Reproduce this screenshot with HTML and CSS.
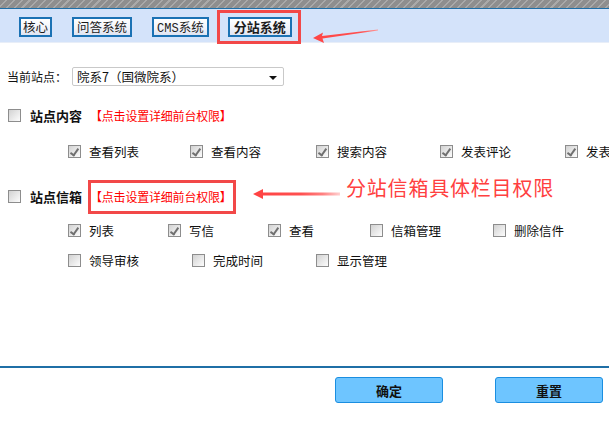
FILE: index.html
```html
<!DOCTYPE html>
<html lang="zh">
<head>
<meta charset="utf-8">
<title>分站系统</title>
<link rel="stylesheet" href="styles.css">
</head>
<body>
<div class="page">
  <div class="stripe"></div>
  <div class="tabbar">
    <span class="tab tab-narrow">核心</span>
    <span class="tab">问答系统</span>
    <span class="tab"><span class="mono">CMS</span>系统</span>
    <span class="tab tab-active">分站系统</span>
  </div>

  <div class="site-row">
    <span class="site-label">当前站点：</span>
    <div class="select">
      <span>院系7（国微院系）</span>
      <span class="caret"></span>
    </div>
  </div>

  <div class="section-row sec1">
    <span class="cb"></span>
    <span class="sec-title">站点内容</span>
    <span class="sec-link">【点击设置详细前台权限】</span>
  </div>
  <div class="opts opts-a">
    <label class="opt"><span class="cb checked"></span>查看列表</label>
    <label class="opt"><span class="cb checked"></span>查看内容</label>
    <label class="opt"><span class="cb checked"></span>搜索内容</label>
    <label class="opt"><span class="cb checked"></span>发表评论</label>
    <label class="opt"><span class="cb checked"></span>发表回复</label>
  </div>

  <div class="section-row sec2">
    <span class="cb"></span>
    <span class="sec-title">站点信箱</span>
    <span class="sec-link">【点击设置详细前台权限】</span>
  </div>
  <div class="opts opts-b">
    <label class="opt"><span class="cb checked"></span>列表</label>
    <label class="opt"><span class="cb checked"></span>写信</label>
    <label class="opt"><span class="cb checked"></span>查看</label>
    <label class="opt"><span class="cb"></span>信箱管理</label>
    <label class="opt"><span class="cb"></span>删除信件</label>
  </div>
  <div class="opts opts-c">
    <label class="opt"><span class="cb"></span>领导审核</label>
    <label class="opt"><span class="cb"></span>完成时间</label>
    <label class="opt"><span class="cb"></span>显示管理</label>
  </div>

  <div class="footer">
    <button class="btn">确定</button>
    <button class="btn">重置</button>
  </div>

  <div class="mark mark-tab"></div>
  <div class="mark mark-link"></div>
  <svg class="arrow arrow-1" width="80" height="16" viewBox="0 0 80 16">
    <defs>
      <linearGradient id="g1" x1="0" y1="0" x2="1" y2="0">
        <stop offset="0" stop-color="#ff4545"/>
        <stop offset="0.75" stop-color="#ff5050"/>
        <stop offset="1" stop-color="#ff9a9a"/>
      </linearGradient>
    </defs>
    <path d="M1 11 L11 5.5 L10 9 L66 2.5 L66 3.6 L10.5 11.5 L12 16 Z" fill="url(#g1)"/>
  </svg>
  <svg class="arrow arrow-2" width="92" height="12" viewBox="0 0 92 12">
    <defs>
      <linearGradient id="g2" x1="0" y1="0" x2="1" y2="0">
        <stop offset="0" stop-color="#ff4242"/>
        <stop offset="0.55" stop-color="#ff5050"/>
        <stop offset="0.8" stop-color="#ff8080"/>
        <stop offset="1" stop-color="#ffd0d0"/>
      </linearGradient>
    </defs>
    <path d="M0 6 L10 1 L10 4.6 L87 4.6 L87 7.4 L10 7.4 L10 11 Z" fill="url(#g2)"/>
  </svg>
  <div class="note">分站信箱具体栏目权限</div>
</div>
</body>
</html>
```

FILE: styles.css
```css
html, body {
  margin: 0;
  padding: 0;
  background: #fff;
}

.page {
  position: relative;
  width: 609px;
  height: 425px;
  overflow: hidden;
  font-family: "Noto Sans CJK SC", "DejaVu Sans", sans-serif;
  font-size: 12px;
  color: #111;
}

.stripe {
  height: 8px;
  background: repeating-linear-gradient(135deg, #8e8e8e 0px, #8e8e8e 4px, #a9a9a9 4px, #a9a9a9 5.5px);
}

.tabbar {
  box-sizing: border-box;
  height: 35px;
  border-top: 1px solid #1f6ea6;
  border-bottom: 1px solid #e8eef8;
  background: #d4e3fa;
  display: flex;
  align-items: flex-start;
  gap: 20px;
  padding: 8px 0 0 19px;
}

.tab {
  box-sizing: border-box;
  height: 20px;
  padding: 0 3px;
  border: 2px solid #1b72b4;
  background: linear-gradient(#ffffff, #f2f4fa 55%, #dfe4f2);
  line-height: 16px;
  font-size: 12.5px;
  color: #1c1c1c;
  white-space: nowrap;
}

.tab-narrow {
  padding: 0 2px;
}

.mono {
  font-family: "Liberation Mono", monospace;
  font-size: 12px;
}

.tab-active {
  font-weight: bold;
  font-size: 13px;
  padding: 0 4px;
  margin-left: -1px;
}

.site-row {
  display: flex;
  align-items: center;
  margin-top: 24px;
  padding-left: 7px;
  height: 19px;
}

.site-label {
  width: 65px;
  font-size: 12px;
}

.select {
  box-sizing: border-box;
  width: 212px;
  height: 19px;
  border: 1px solid #c9c9c9;
  border-radius: 2px;
  display: flex;
  align-items: center;
  justify-content: space-between;
  padding: 0 6px 0 4px;
  font-size: 12.5px;
  line-height: 17px;
}

.caret {
  width: 0;
  height: 0;
  border-left: 4px solid transparent;
  border-right: 4px solid transparent;
  border-top: 4px solid #111;
  margin-top: 2px;
}

.section-row {
  display: flex;
  align-items: center;
  height: 13px;
  padding-left: 8px;
}

.sec1 {
  margin-top: 23px;
}

.sec2 {
  margin-top: 32px;
}

.sec-title {
  margin-left: 9px;
  font-weight: bold;
  font-size: 13px;
  color: #111;
}

.sec-link {
  margin-left: 8px;
  color: #f00;
  font-size: 12px;
  letter-spacing: -0.2px;
}

.cb {
  box-sizing: border-box;
  flex: none;
  width: 13px;
  height: 13px;
  border: 1px solid #8d8d8d;
  background: linear-gradient(135deg, #d2d2d2, #f4f4f4 80%, #fcfcfc);
  display: inline-block;
  position: relative;
}

.cb.checked::after {
  content: "";
  position: absolute;
  left: 3px;
  top: 1px;
  width: 3px;
  height: 7px;
  border-right: 2px solid #707070;
  border-bottom: 2px solid #707070;
  transform: rotate(35deg);
  transform-origin: center;
}

.opts {
  display: grid;
  padding-left: 68px;
  height: 13px;
  white-space: nowrap;
}

.opts-a {
  margin-top: 23px;
  grid-template-columns: 122px 126px 124px 125px 124px;
}

.opts-b {
  margin-top: 21px;
  grid-template-columns: 100px 100px 102px 123px 120px;
}

.opts-c {
  margin-top: 17px;
  grid-template-columns: 124px 124px 124px;
}

.opt {
  display: flex;
  align-items: center;
  gap: 8px;
  font-size: 12.5px;
  line-height: 13px;
  color: #111;
}

.footer {
  margin-top: 99px;
  border-top: 2px solid #1f6fa6;
  display: flex;
  justify-content: flex-end;
  gap: 52px;
  padding: 9px 6px 0 0;
}

.btn {
  box-sizing: border-box;
  width: 108px;
  height: 26px;
  border: 1px solid #1a8ee0;
  border-radius: 3px;
  background: #6ec5ff;
  font-family: "Noto Sans CJK SC", sans-serif;
  font-weight: bold;
  font-size: 13px;
  color: #111;
  padding: 0;
}

.mark {
  position: absolute;
  box-sizing: border-box;
  border: 3px solid #f24848;
}

.mark-tab {
  left: 217px;
  top: 10px;
  width: 84px;
  height: 34px;
}

.mark-link {
  left: 88px;
  top: 180px;
  width: 148px;
  height: 34px;
}

.arrow {
  position: absolute;
}

.arrow-1 {
  left: 312px;
  top: 27px;
}

.arrow-2 {
  left: 253px;
  top: 188px;
}

.note {
  position: absolute;
  left: 346px;
  top: 175px;
  font-size: 20px;
  line-height: 26px;
  color: #ff4040;
  letter-spacing: 0.8px;
  white-space: nowrap;
}
```
